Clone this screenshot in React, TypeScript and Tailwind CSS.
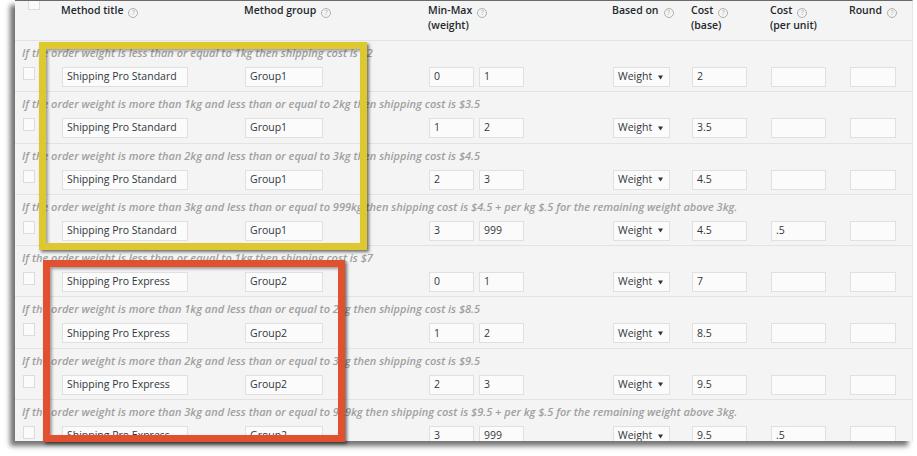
import React from "react";

const F = { fontFamily: '"Open Sans", "Noto Sans", Arial, sans-serif' };

type Row = {
  desc: string;
  title: string;
  group: string;
  min: string;
  max: string;
  base: string;
  unit: string;
};

const rows: Row[] = [
  { desc: "If the order weight is less than or equal to 1kg then shipping cost is $2", title: "Shipping Pro Standard", group: "Group1", min: "0", max: "1", base: "2", unit: "" },
  { desc: "If the order weight is more than 1kg and less than or equal to 2kg then shipping cost is $3.5", title: "Shipping Pro Standard", group: "Group1", min: "1", max: "2", base: "3.5", unit: "" },
  { desc: "If the order weight is more than 2kg and less than or equal to 3kg then shipping cost is $4.5", title: "Shipping Pro Standard", group: "Group1", min: "2", max: "3", base: "4.5", unit: "" },
  { desc: "If the order weight is more than 3kg and less than or equal to 999kg then shipping cost is $4.5 + per kg $.5 for the remaining weight above 3kg.", title: "Shipping Pro Standard", group: "Group1", min: "3", max: "999", base: "4.5", unit: ".5" },
  { desc: "If the order weight is less than or equal to 1kg then shipping cost is $7", title: "Shipping Pro Express", group: "Group2", min: "0", max: "1", base: "7", unit: "" },
  { desc: "If the order weight is more than 1kg and less than or equal to 2kg then shipping cost is $8.5", title: "Shipping Pro Express", group: "Group2", min: "1", max: "2", base: "8.5", unit: "" },
  { desc: "If the order weight is more than 2kg and less than or equal to 3kg then shipping cost is $9.5", title: "Shipping Pro Express", group: "Group2", min: "2", max: "3", base: "9.5", unit: "" },
  { desc: "If the order weight is more than 3kg and less than or equal to 999kg then shipping cost is $9.5 + per kg $.5 for the remaining weight above 3kg.", title: "Shipping Pro Express", group: "Group2", min: "3", max: "999", base: "9.5", unit: ".5" },
];

function Help() {
  return (
    <span className="ml-[5px] inline-flex h-[10px] w-[10px] items-center justify-center rounded-full border border-[#b0b0b0] text-[7px] leading-none font-normal text-[#b0b0b0] align-[-1px]">
      ?
    </span>
  );
}

function Field({ w, children }: { w: string; children?: React.ReactNode }) {
  return (
    <div className={`${w} flex h-[20px] items-center border border-[#e0e0e0] bg-[#fbfbfb] pl-[4px] text-[10.5px] text-[#32373c]`}>
      {children}
    </div>
  );
}

const GRID = "grid grid-cols-[46px_183px_184px_184px_79px_79px_79px_1fr]";

export default function App() {
  return (
    <div className="relative h-[456px] w-[917px] overflow-hidden bg-white" style={F}>
      <div className="relative ml-[15px] h-[441px] w-[898px] overflow-hidden border-t border-[#6a6a6a] border-r border-r-[#e6e6e6] bg-[#f4f4f4] shadow-[-5px_5px_5px_rgba(0,0,0,0.55)]">
        {/* header */}
        <div className={`${GRID} h-[40px] border-b border-[#e3e3e3] text-[10.5px] leading-[15px] font-semibold text-[#23282d]`}>
          <div className="pl-[13px]">
            <div className="-mt-[4px] h-[13px] w-[12px] border border-[#dcdcdc] bg-[#fbfbfb]" />
          </div>
          <div className="pt-[2px]">Method title<Help /></div>
          <div className="pt-[2px]">Method group<Help /></div>
          <div className="pt-[2px]">Min-Max<Help /><br />(weight)</div>
          <div className="pt-[2px]">Based on<Help /></div>
          <div className="pt-[2px]">Cost<Help /><br />(base)</div>
          <div className="pt-[2px]">Cost<Help /><br />(per unit)</div>
          <div className="pt-[2px]">Round<Help /></div>
        </div>
        {rows.map((r, i) => (
          <div key={i} className="h-[51.3px] border-b border-[#e3e3e3]">
            <div className="truncate pl-[7px] pt-[4px] text-[11px] leading-[15px] font-semibold italic text-[#a0a0a0]">
              {r.desc}
            </div>
            <div className={`${GRID} mt-[7px]`}>
              <div className="pl-[8px]">
                <div className="h-[13px] w-[12px] border border-[#dcdcdc] bg-[#fbfbfb]" />
              </div>
              <div className="pl-[1px]"><Field w="w-[126px]">{r.title}</Field></div>
              <div className="pl-[1px]"><Field w="w-[78px]">{r.group}</Field></div>
              <div className="flex gap-[5px] pl-[1px]">
                <Field w="w-[45px]">{r.min}</Field>
                <Field w="w-[45px]">{r.max}</Field>
              </div>
              <div className="pl-[1px]">
                <div className="flex h-[20px] w-[57px] items-center justify-between border border-[#e0e0e0] bg-[#fbfbfb] pl-[4px] pr-[6px] text-[10.5px] text-[#32373c]">
                  <span>Weight</span>
                  <svg width="5" height="5" viewBox="0 0 5 5"><path d="M0 0.5 L5 0.5 L2.5 4.5 Z" fill="#333" /></svg>
                </div>
              </div>
              <div className="pl-[1px]"><Field w="w-[55px]">{r.base}</Field></div>
              <div className="pl-[1px]"><Field w="w-[55px]">{r.unit}</Field></div>
              <div className="pl-[1px]"><Field w="w-[46px]" /></div>
            </div>
          </div>
        ))}
      </div>
      {/* annotation boxes */}
      <div className="absolute left-[39px] top-[42px] h-[208px] w-[328px] border-[7px] border-[#dec82f] shadow-[2px_2px_3px_rgba(0,0,0,0.55),inset_2px_2px_3px_rgba(0,0,0,0.35)]" />
      <div className="absolute left-[43px] top-[260px] h-[182px] w-[302px] border-[7px] border-[#e1502f] shadow-[2px_2px_3px_rgba(0,0,0,0.55),inset_2px_2px_3px_rgba(0,0,0,0.35)]" />
    </div>
  );
}
